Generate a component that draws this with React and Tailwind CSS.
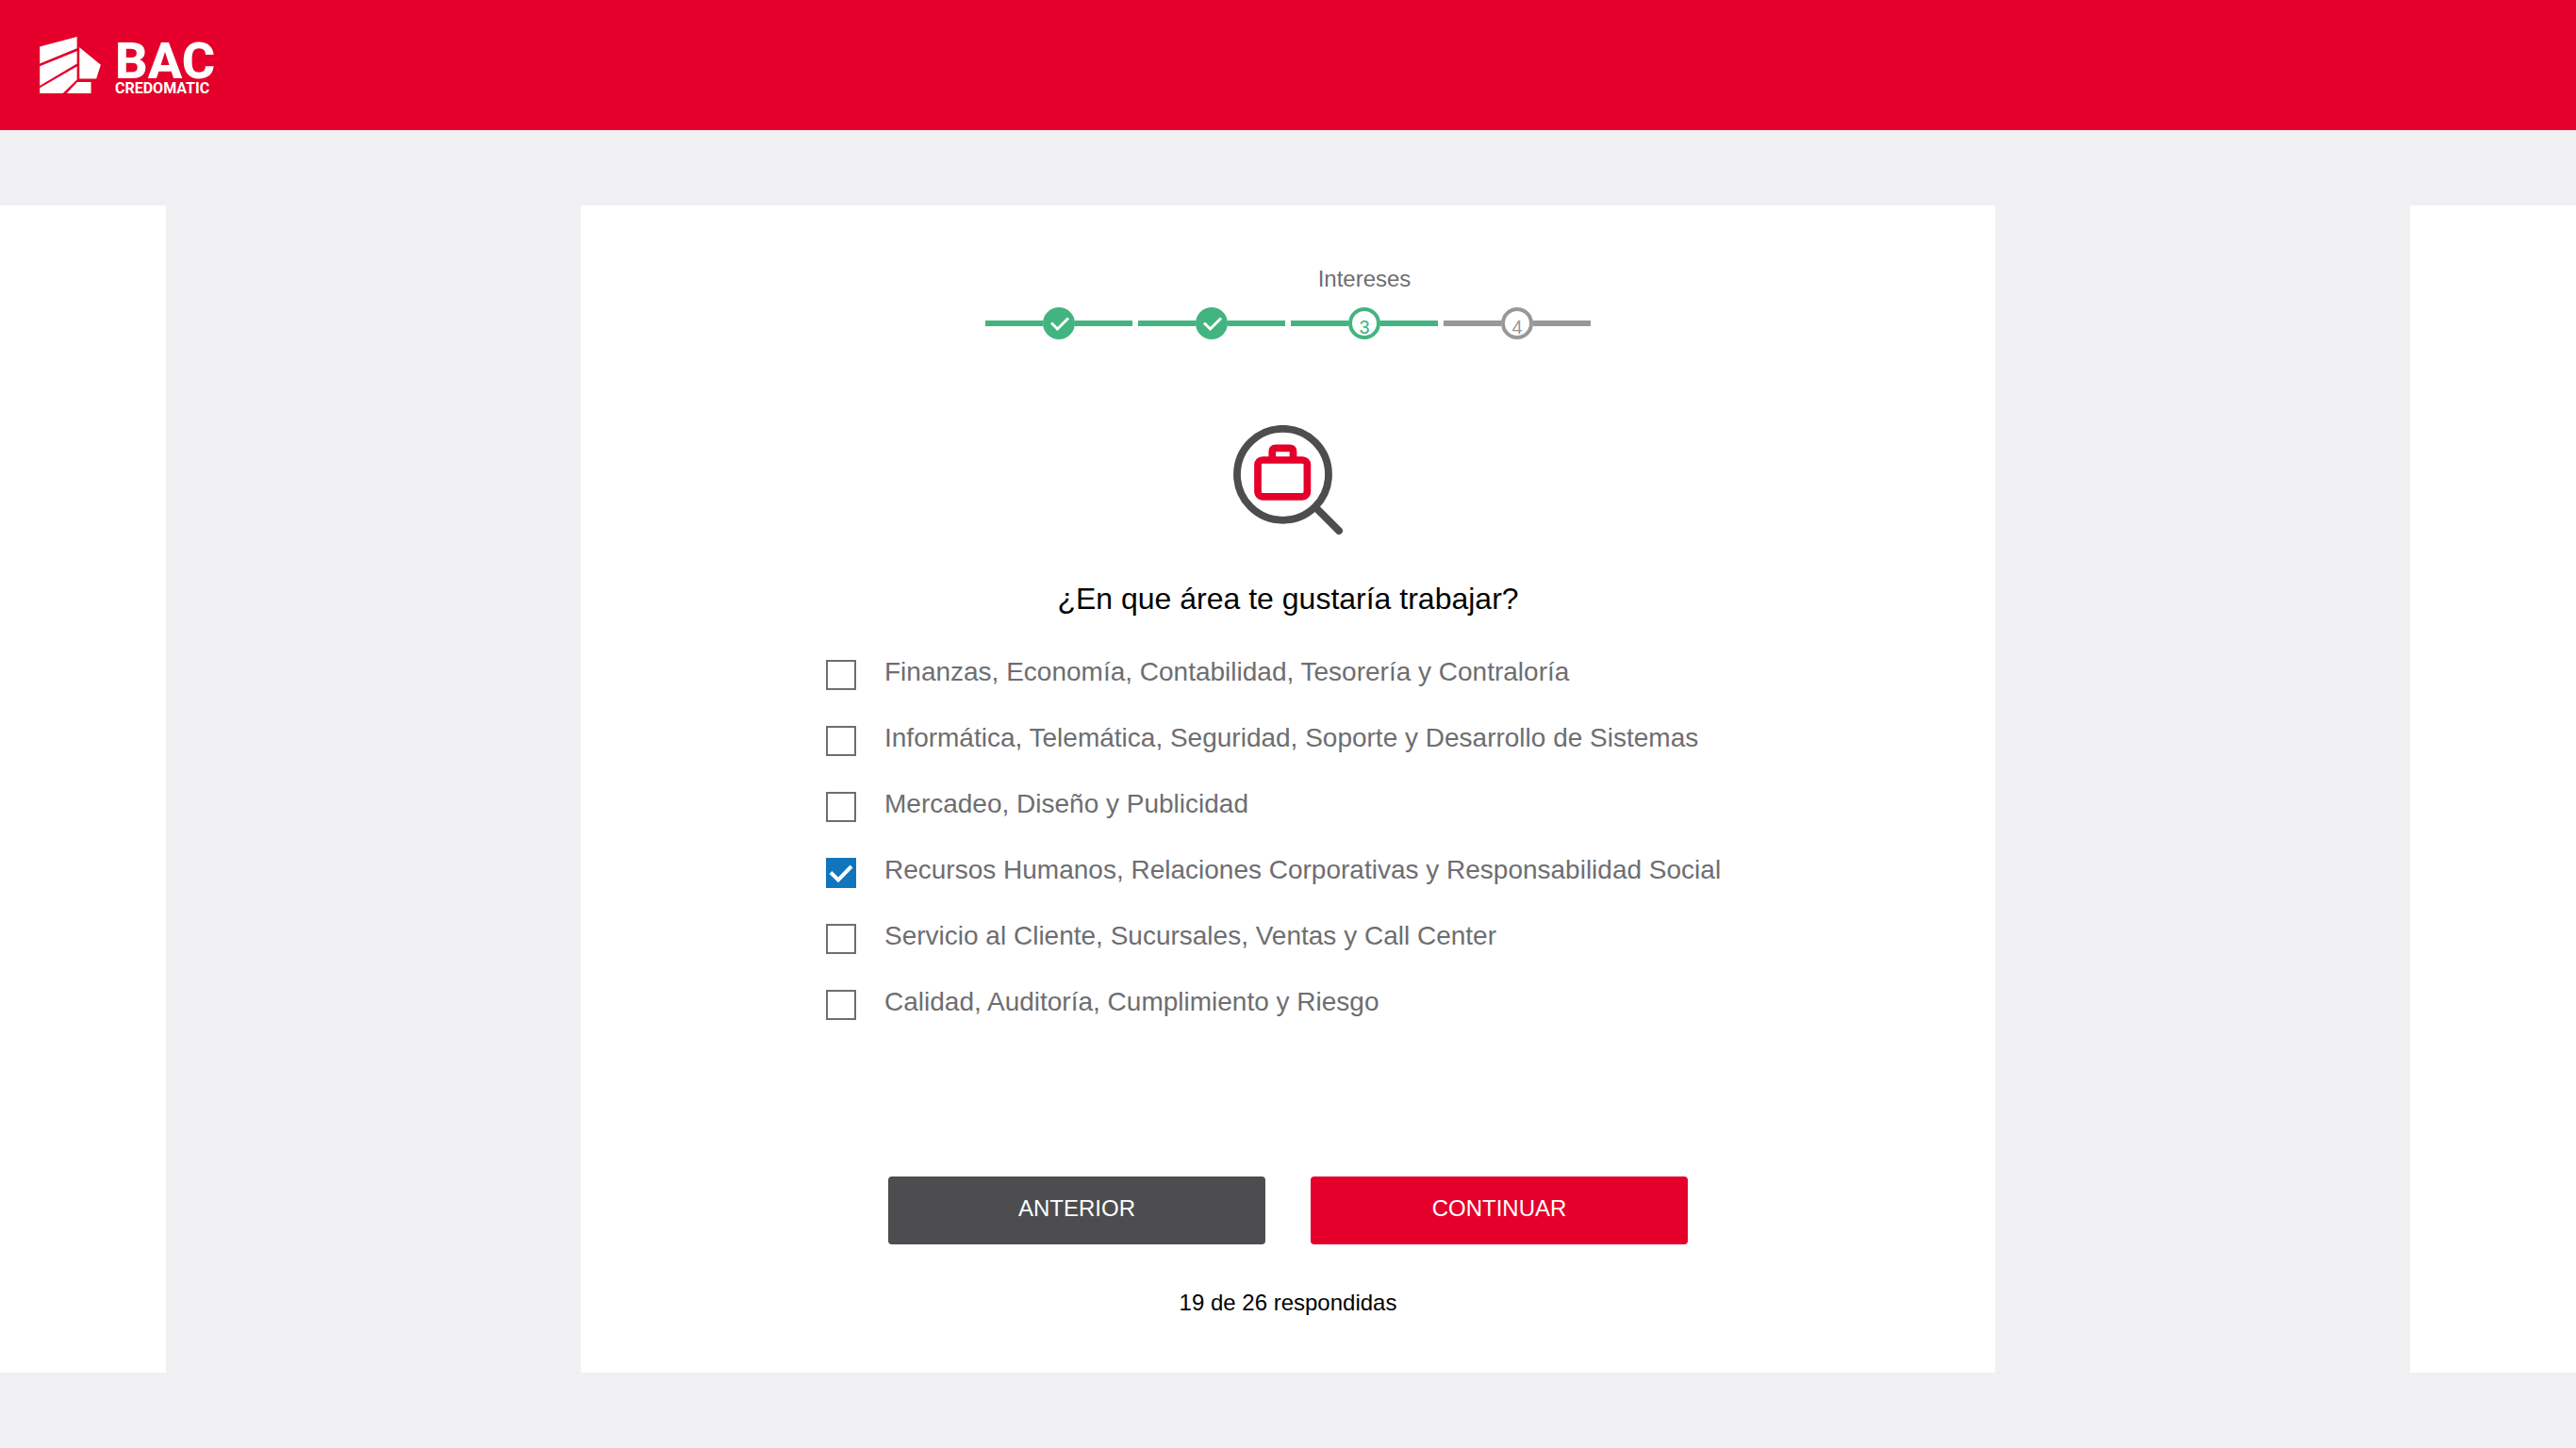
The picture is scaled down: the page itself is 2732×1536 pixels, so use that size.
import { useState } from "react";

const STEPS = [
  { id: 1, label: "", state: "done" },
  { id: 2, label: "", state: "done" },
  { id: 3, label: "Intereses", state: "current" },
  { id: 4, label: "", state: "pending" },
];

const AREAS = [
  "Finanzas, Economía, Contabilidad, Tesorería y Contraloría",
  "Informática, Telemática, Seguridad, Soporte y Desarrollo de Sistemas",
  "Mercadeo, Diseño y Publicidad",
  "Recursos Humanos, Relaciones Corporativas y Responsabilidad Social",
  "Servicio al Cliente, Sucursales, Ventas y Call Center",
  "Calidad, Auditoría, Cumplimiento y Riesgo",
];

function Logo() {
  return (
    <a href="#" aria-label="BAC Credomatic" className="flex items-center gap-[15px] text-white">
      <svg viewBox="67 56 195 181" className="h-[60px] w-[65px] fill-current" aria-hidden="true">
        <path d="M67 88 186 56V93L67 142Z" />
        <path d="M67 150 186 102V142L67 213Z" />
        <path d="M67 220 186 151V193L141 237H67Z" />
        <path d="M194 90 262 146 248 190H194Z" />
        <path d="M187 201H231V237H153Z" />
      </svg>
      <span className="flex flex-col pt-1.5 font-['Roboto',sans-serif] font-bold">
        <span className="text-[54px] leading-[43px] font-extrabold">BAC</span>
        <span className="text-base leading-4">CREDOMATIC</span>
      </span>
    </a>
  );
}

function Step({ id, label, state }) {
  const pending = state === "pending";
  return (
    <li className="flex w-[156px] flex-col items-center gap-[14px]">
      <span className="h-8 text-2xl leading-8 text-[#6d6e71]">{label}</span>
      <div className={pending ? "flex w-full items-center text-[#989898]" : "flex w-full items-center text-[#43b480]"}>
        <span className="h-1.5 flex-1 bg-current" />
        {state === "done" ? (
          <svg viewBox="0 0 34 34" className="h-[34px] w-[34px]" aria-label={`Paso ${id} completado`}>
            <circle cx="17" cy="17" r="17" fill="currentColor" />
            <path d="M9 16.5 15.5 23 27 11.5" fill="none" stroke="#fff" strokeWidth="3" />
          </svg>
        ) : (
          <span className="flex h-[34px] w-[34px] justify-center rounded-full border-4 border-current pt-[5px] text-xl leading-6">
            {id}
          </span>
        )}
        <span className="h-1.5 flex-1 bg-current" />
      </div>
    </li>
  );
}

function JobSearchIcon() {
  return (
    <svg viewBox="0 0 116 116" className="h-[116px] w-[116px]" fill="none" aria-hidden="true">
      <circle cx="52.5" cy="52.3" r="48.5" stroke="#4d4d4f" strokeWidth="7.8" />
      <path d="M88 88 112 112" stroke="#4d4d4f" strokeWidth="8" strokeLinecap="round" />
      <rect x="26" y="37" width="52.4" height="38.8" rx="5" stroke="#e4002b" strokeWidth="7.7" />
      <path d="M41.3 37V28.3Q41.3 24.4 45.2 24.4H59.6Q63.5 24.4 63.5 28.3V37" stroke="#e4002b" strokeWidth="7.7" />
    </svg>
  );
}

function AreaOption({ label, checked, onChange }) {
  return (
    <label className="flex min-h-9 cursor-pointer items-start gap-[30px]">
      <span className="mt-[3px] grid h-8 w-8 shrink-0">
        <input
          type="checkbox"
          checked={checked}
          onChange={onChange}
          className="col-start-1 row-start-1 h-8 w-8 appearance-none border-2 border-[#6d6e71] bg-white checked:border-[#1075bd] checked:bg-[#1075bd]"
        />
        {checked && (
          <svg viewBox="0 0 32 32" className="pointer-events-none col-start-1 row-start-1 h-8 w-8" aria-hidden="true">
            <path d="M5 15.5 13 23.5 27 9" fill="none" stroke="#fff" strokeWidth="4" />
          </svg>
        )}
      </span>
      <span className="text-[28px] leading-8 text-[#6d6e71]">{label}</span>
    </label>
  );
}

export default function App() {
  const [selected, setSelected] = useState([3]);
  const toggle = (i) =>
    setSelected((s) => (s.includes(i) ? s.filter((n) => n !== i) : [...s, i]));

  return (
    <div className="flex min-h-screen flex-col bg-[#f0f0f2] font-['Liberation_Sans',Arial,sans-serif]">
      <header className="bg-[#e4002b] px-[42px] py-9">
        <div className="flex h-[66px] items-center">
          <Logo />
        </div>
      </header>

      <main className="flex flex-1 gap-8 py-20 2xl:gap-[440px]">
        <div className="flex-1 bg-white" aria-hidden="true" />
        <form
          onSubmit={(e) => e.preventDefault()}
          className="flex min-w-0 basis-[1500px] flex-col items-center bg-white px-8 pt-[62px] pb-[58px]"
        >
          <ol className="flex gap-1.5">
            {STEPS.map((s) => (
              <Step key={s.id} {...s} />
            ))}
          </ol>

          <div className="mt-[91px]">
            <JobSearchIcon />
          </div>

          <fieldset className="mt-12 w-full max-w-[980px]">
            <legend className="w-full text-center text-[32px] leading-10 text-black">
              ¿En que área te gustaría trabajar?
            </legend>
            <div className="mt-[42px] flex flex-col gap-[34px]">
              {AREAS.map((label, i) => (
                <AreaOption key={label} label={label} checked={selected.includes(i)} onChange={() => toggle(i)} />
              ))}
            </div>
          </fieldset>

          <div className="mt-auto flex w-full max-w-[848px] gap-12">
            <button type="button" className="h-[72px] flex-1 rounded bg-[#4d4d4f] pb-1 text-2xl text-white">
              ANTERIOR
            </button>
            <button type="submit" className="h-[72px] flex-1 rounded bg-[#e4002b] pb-1 text-2xl text-white">
              CONTINUAR
            </button>
          </div>
          <p className="mt-[46px] text-2xl leading-8 text-black">19 de 26 respondidas</p>
        </form>
        <div className="flex-1 bg-white" aria-hidden="true" />
      </main>
    </div>
  );
}
